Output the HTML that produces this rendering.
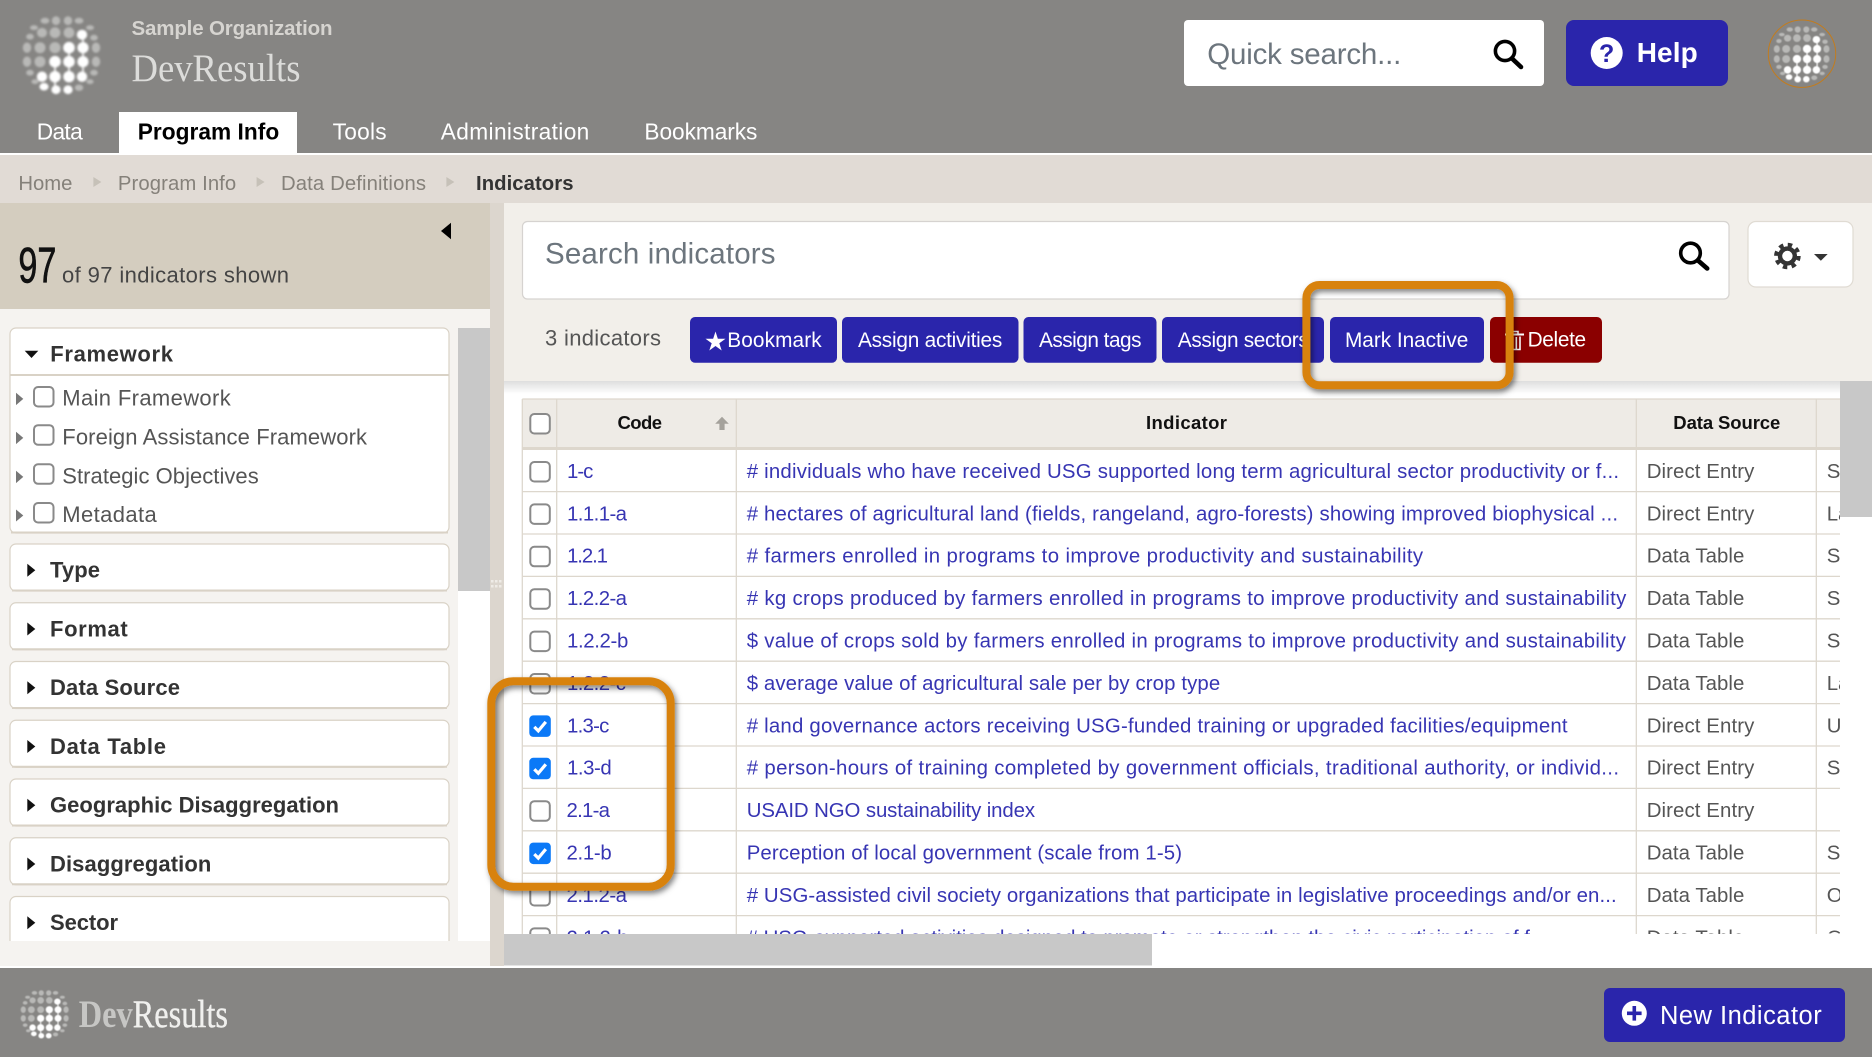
<!DOCTYPE html>
<html lang="en">
<head>
<meta charset="utf-8">
<title>Indicators - DevResults</title>
<style>
html,body{margin:0;padding:0;background:#fff;width:1872px;height:1057px;overflow:hidden}
svg{display:block}
text{font-family:"Liberation Sans",Arial,sans-serif;white-space:pre}
.serif{font-family:"Liberation Serif",serif}
.nav{font-size:22.7px;fill:#fff}
.crumb{font-size:20.3px;fill:#85817a}
.btn{font-size:20.8px;fill:#fff}
.head{font-size:22px;font-weight:700;fill:#333}
.item{font-size:22px;fill:#555}
.th{font-size:18.5px;font-weight:700;fill:#111}
.code,.link{font-size:20.4px;fill:#3735b3}
.src{font-size:20.4px;fill:#555}
.box{fill:#fff;stroke:#8a8a8a;stroke-width:2}
.grid{stroke:#ddd7cd;stroke-width:1.3}
.panel{fill:#fff;stroke:#d9d2c6;stroke-width:1.2}
.pline{stroke:#d9d2c6;stroke-width:2}
.rarrow{fill:#111}
</style>
</head>
<body>
<svg width="1872" height="1057" viewBox="0 0 1872 1057" xmlns="http://www.w3.org/2000/svg">
<defs>
  <g id="globe">
    <g fill="#b9b9b7">
      <ellipse cx="-28" cy="-27" rx="4" ry="2.4"/><ellipse cx="28" cy="-27" rx="4" ry="2.4"/>
      <ellipse cx="-17" cy="-34" rx="4.4" ry="3"/><ellipse cx="-6" cy="-34" rx="4.2" ry="4.4"/><ellipse cx="6" cy="-34" rx="4.2" ry="4.4"/><ellipse cx="17" cy="-34" rx="4.4" ry="3"/>
      <ellipse cx="-32" cy="-18" rx="3.8" ry="2.9"/><ellipse cx="-20" cy="-22" rx="5" ry="4.8"/><circle cx="-7" cy="-22" r="5.4"/><circle cx="7" cy="-22" r="5.4"/><ellipse cx="32" cy="-17" rx="3.8" ry="2.9"/>
      <ellipse cx="-35" cy="-7" rx="4.2" ry="5.2"/><circle cx="-22" cy="-7" r="5.5"/><circle cx="-7" cy="-7" r="5.6"/><ellipse cx="34" cy="-7" rx="4.2" ry="5.2"/>
      <ellipse cx="-35" cy="7" rx="4.2" ry="5.2"/><circle cx="-22" cy="7" r="5.5"/><ellipse cx="34" cy="7" rx="4.2" ry="5.2"/>
      <ellipse cx="-32" cy="18" rx="3.8" ry="2.9"/><ellipse cx="32" cy="18" rx="3.8" ry="2.9"/>
      <ellipse cx="-27" cy="27" rx="3.6" ry="2.4"/><ellipse cx="28" cy="27" rx="3.6" ry="2.4"/>
      <ellipse cx="17" cy="33" rx="4.2" ry="3.2"/>
    </g>
    <g fill="#fff">
      <ellipse cx="20" cy="-20" rx="5.2" ry="5"/>
      <circle cx="7" cy="-7" r="5.8"/><circle cx="21" cy="-7" r="5.6"/>
      <circle cx="-7" cy="7" r="5.8"/><circle cx="7" cy="7" r="5.8"/><circle cx="21" cy="7" r="5.6"/>
      <circle cx="-20" cy="22" r="5.2"/><circle cx="-7" cy="22" r="5.7"/><circle cx="7" cy="22" r="5.7"/><circle cx="20" cy="22" r="5.2"/>
      <ellipse cx="-18" cy="32" rx="4.6" ry="3.8"/><ellipse cx="-6" cy="35" rx="4.6" ry="4.4"/><ellipse cx="6" cy="35" rx="4.6" ry="4.4"/>
      <rect x="6.2" y="-8" width="1.6" height="30"/><rect x="20.2" y="-20" width="1.6" height="42"/><rect x="-7.8" y="7" width="1.6" height="28"/>
    </g>
  </g>
  <clipPath id="tclip"><rect x="504" y="381" width="1336" height="553"/></clipPath>
  <clipPath id="sclip"><rect x="0" y="309" width="490" height="632"/></clipPath>
  <clipPath id="lastcol"><rect x="1817" y="450" width="23" height="484"/></clipPath>
  <linearGradient id="shade" x1="0" y1="0" x2="0" y2="1"><stop offset="0" stop-color="#000" stop-opacity=".13"/><stop offset="1" stop-color="#000" stop-opacity="0"/></linearGradient>
  <filter id="ds" x="-20%" y="-20%" width="140%" height="140%"><feDropShadow dx="2" dy="3" stdDeviation="3" flood-color="#000" flood-opacity=".5"/></filter>
  <filter id="soft" x="-10%" y="-10%" width="120%" height="120%"><feGaussianBlur stdDeviation="1"/></filter>
  <filter id="soft2" x="-10%" y="-10%" width="120%" height="120%"><feGaussianBlur stdDeviation=".7"/></filter>
  <g id="chk"><rect x="1" y="1" width="19.5" height="19.5" rx="4" class="box"/></g>
  <g id="chked"><rect x="0" y="0" width="21.5" height="21.5" rx="4" fill="#0b79f7"/><path d="M5 11.5l4 4 7.5-9" fill="none" stroke="#fff" stroke-width="3.2"/></g>
  <path id="tri" d="M0 0l8 6.5-8 6.5z"/>
</defs>

<!-- top header -->
<rect width="1872" height="153" fill="#868583"/>
<use href="#globe" transform="translate(62 54.7)" filter="url(#soft)"/>
<text x="131.5" y="34.8" font-size="20.5" font-weight="700" fill="#d6d4d0" textLength="201">Sample Organization</text>
<text x="131.5" y="81" class="serif" font-size="39" fill="#dcdcda" textLength="169" lengthAdjust="spacingAndGlyphs">DevResults</text>

<rect x="1184" y="20" width="360" height="66" rx="4" fill="#fff"/>
<text x="1207.3" y="64" font-size="29.5" fill="#6c757d" textLength="194">Quick search...</text>
<g fill="none" stroke="#000"><circle cx="1505" cy="51" r="9.6" stroke-width="3.6"/><path d="M1512 58.5l9 8.5" stroke-width="4.6" stroke-linecap="round"/></g>

<rect x="1566" y="20" width="162" height="66" rx="8" fill="#2a25ab"/>
<circle cx="1606.7" cy="53" r="16" fill="#fff"/>
<text x="1606.7" y="62" font-size="25" font-weight="700" fill="#2a25ab" text-anchor="middle">?</text>
<text x="1636.7" y="62" font-size="28" font-weight="700" fill="#fff" textLength="61">Help</text>

<circle cx="1802" cy="53.7" r="33.7" fill="none" stroke="#c27c1e" stroke-width="1"/>
<use href="#globe" transform="translate(1802 54) scale(.72)" filter="url(#soft2)"/>

<!-- nav tabs -->
<rect x="119" y="112" width="178" height="41" fill="#fff"/>
<g transform="translate(0 -.6)">
<text x="36.7" y="140" class="nav" textLength="46">Data</text>
<text x="137.7" y="140" class="nav" style="fill:#000;font-weight:700" textLength="141.5">Program Info</text>
<text x="332.6" y="140" class="nav" textLength="54">Tools</text>
<text x="440.8" y="140" class="nav" textLength="148.5">Administration</text>
<text x="644.4" y="140" class="nav" textLength="113">Bookmarks</text>
</g>

<!-- breadcrumb -->
<rect y="155" width="1872" height="48" fill="#e1dbd5"/>
<text x="18.4" y="190" class="crumb" textLength="54">Home</text>
<path d="M93.4 177l8 5-8 5z" fill="#c6c1b8"/>
<text x="117.9" y="190" class="crumb" textLength="118.3">Program Info</text>
<path d="M256.6 177l8 5-8 5z" fill="#c6c1b8"/>
<text x="281" y="190" class="crumb" textLength="145">Data Definitions</text>
<path d="M446.4 177l8 5-8 5z" fill="#c6c1b8"/>
<text x="476" y="190" class="crumb" style="font-weight:700;fill:#333" textLength="97.5">Indicators</text>

<!-- sidebar -->
<rect y="203" width="490" height="106" fill="#d4cdbf"/>
<path d="M451 222.7v16.6l-10-8.3z" fill="#000"/>
<text x="18.4" y="282.3" font-size="50" fill="#111" stroke="#111" stroke-width=".7" textLength="38" lengthAdjust="spacingAndGlyphs">97</text>
<text x="62" y="282.5" font-size="22" fill="#444" textLength="227">of 97 indicators shown</text>

<rect y="309" width="490" height="657" fill="#f5f3f0"/>
<rect x="458" y="591" width="32" height="350" fill="#fff"/>
<rect x="458" y="328" width="32" height="263" fill="#c8c8c8"/>
<rect x="490" y="203" width="14" height="763" fill="#dcd6ce"/>
<g fill="#efece7"><rect x="491" y="580" width="2.5" height="2.5"/><rect x="495" y="580" width="2.5" height="2.5"/><rect x="499" y="580" width="2.5" height="2.5"/><rect x="491" y="585" width="2.5" height="2.5"/><rect x="495" y="585" width="2.5" height="2.5"/><rect x="499" y="585" width="2.5" height="2.5"/></g>

<g clip-path="url(#sclip)">
  <rect x="10" y="328" width="439" height="205" rx="6" class="panel"/>
  <line x1="10" y1="375" x2="449" y2="375" class="pline"/>
  <line x1="11" y1="532.5" x2="448" y2="532.5" class="pline"/>
  <path d="M24.7 350.7h13.6l-6.8 7.3z" fill="#111"/>
  <text x="50.3" y="361.7" class="head" textLength="122.7">Framework</text>
  <g fill="#777">
    <path d="M16 392.7l7.3 6.2-7.3 6.2z"/><path d="M16 431.7l7.3 6.2-7.3 6.2z"/><path d="M16 470.7l7.3 6.2-7.3 6.2z"/><path d="M16 509.5l7.3 6-7.3 6z"/>
  </g>
  <use href="#chk" x="33" y="386"/><use href="#chk" x="33" y="424.2"/><use href="#chk" x="33" y="463.3"/><use href="#chk" x="33" y="502"/>
  <g transform="translate(0 -.6)">
  <text x="62.3" y="406" class="item" textLength="168.4">Main Framework</text>
  <text x="62.3" y="445" class="item" textLength="304.7">Foreign Assistance Framework</text>
  <text x="62.3" y="484" class="item" textLength="196.4">Strategic Objectives</text>
  <text x="62.3" y="522.7" class="item" textLength="94.4">Metadata</text>
  </g>

  <g>
    <rect x="10" y="544" width="439" height="47" rx="6" class="panel"/><line x1="12" y1="590.5" x2="447" y2="590.5" class="pline"/>
    <use href="#tri" x="27.3" y="563.8" class="rarrow"/><text x="50" y="577.7" class="head" textLength="50">Type</text>
    <rect x="10" y="602.75" width="439" height="47" rx="6" class="panel"/><line x1="12" y1="649.25" x2="447" y2="649.25" class="pline"/>
    <use href="#tri" x="27.3" y="622.55" class="rarrow"/><text x="50" y="636.45" class="head" textLength="77.7">Format</text>
    <rect x="10" y="661.5" width="439" height="47" rx="6" class="panel"/><line x1="12" y1="708" x2="447" y2="708" class="pline"/>
    <use href="#tri" x="27.3" y="681.3" class="rarrow"/><text x="50" y="695.2" class="head" textLength="130">Data Source</text>
    <rect x="10" y="720.25" width="439" height="47" rx="6" class="panel"/><line x1="12" y1="766.75" x2="447" y2="766.75" class="pline"/>
    <use href="#tri" x="27.3" y="740.05" class="rarrow"/><text x="50" y="753.95" class="head" textLength="116">Data Table</text>
    <rect x="10" y="779" width="439" height="47" rx="6" class="panel"/><line x1="12" y1="825.5" x2="447" y2="825.5" class="pline"/>
    <use href="#tri" x="27.3" y="798.8" class="rarrow"/><text x="50" y="812.7" class="head" textLength="289">Geographic Disaggregation</text>
    <rect x="10" y="837.75" width="439" height="47" rx="6" class="panel"/><line x1="12" y1="884.25" x2="447" y2="884.25" class="pline"/>
    <use href="#tri" x="27.3" y="857.55" class="rarrow"/><text x="50" y="871.45" class="head" textLength="161.3">Disaggregation</text>
    <rect x="10" y="896.5" width="439" height="60" rx="6" class="panel"/>
    <use href="#tri" x="27.3" y="916.3" class="rarrow"/><text x="50" y="930.2" class="head" textLength="68">Sector</text>
  </g>
</g>

<!-- main white area -->
<rect x="504" y="381" width="1368" height="585" fill="#fff"/>

<!-- table -->
<g clip-path="url(#tclip)">
  <rect x="522.3" y="399" width="1318" height="48" fill="#eeebe6"/>
  <rect x="522.3" y="447" width="1318" height="3" fill="#ddd7cd"/>
  <g class="grid">
    <line x1="522.3" y1="399" x2="1840" y2="399"/>
    <line x1="522.3" y1="399" x2="522.3" y2="934"/>
    <line x1="556.7" y1="399" x2="556.7" y2="934"/>
    <line x1="736.3" y1="399" x2="736.3" y2="934"/>
    <line x1="1636.3" y1="399" x2="1636.3" y2="934"/>
    <line x1="1816.3" y1="399" x2="1816.3" y2="934"/>
    <line x1="522.3" y1="491.6" x2="1840" y2="491.6"/>
    <line x1="522.3" y1="534" x2="1840" y2="534"/>
    <line x1="522.3" y1="576.4" x2="1840" y2="576.4"/>
    <line x1="522.3" y1="618.8" x2="1840" y2="618.8"/>
    <line x1="522.3" y1="661.2" x2="1840" y2="661.2"/>
    <line x1="522.3" y1="703.6" x2="1840" y2="703.6"/>
    <line x1="522.3" y1="746" x2="1840" y2="746"/>
    <line x1="522.3" y1="788.4" x2="1840" y2="788.4"/>
    <line x1="522.3" y1="830.8" x2="1840" y2="830.8"/>
    <line x1="522.3" y1="873.2" x2="1840" y2="873.2"/>
    <line x1="522.3" y1="915.6" x2="1840" y2="915.6"/>
  </g>
  <use href="#chk" x="529.3" y="413"/>
  <text x="617.5" y="429" class="th" textLength="44.5">Code</text>
  <path d="M722 416.7l6.8 7h-4.2v6.3h-5.2v-6.3h-4.2z" fill="#a5a29c"/>
  <text x="1146" y="429" class="th" textLength="81">Indicator</text>
  <text x="1673.3" y="429" class="th" textLength="107">Data Source</text>

  <use href="#chk" x="529.3" y="461"/>
  <use href="#chk" x="529.3" y="503.4"/>
  <use href="#chk" x="529.3" y="545.8"/>
  <use href="#chk" x="529.3" y="588.2"/>
  <use href="#chk" x="529.3" y="630.6"/>
  <use href="#chk" x="529.3" y="673"/>
  <use href="#chked" x="529.3" y="715.4"/>
  <use href="#chked" x="529.3" y="757.8"/>
  <use href="#chk" x="529.3" y="800.2"/>
  <use href="#chked" x="529.3" y="842.6"/>
  <use href="#chk" x="529.3" y="885"/>
  <use href="#chk" x="529.3" y="927.4"/>

  <g transform="translate(0 -.6)">
  <text x="567" y="478.5" class="code" textLength="26.3">1-c</text>
  <text x="567" y="520.9" class="code" textLength="60">1.1.1-a</text>
  <text x="567" y="563.3" class="code" textLength="41">1.2.1</text>
  <text x="567" y="605.7" class="code" textLength="60">1.2.2-a</text>
  <text x="567" y="648.1" class="code" textLength="61.3">1.2.2-b</text>
  <text x="567" y="690.5" class="code" textLength="59">1.2.2-c</text>
  <text x="567" y="732.9" class="code" textLength="42.3">1.3-c</text>
  <text x="567" y="775.3" class="code" textLength="44.7">1.3-d</text>
  <text x="566.5" y="817.7" class="code" textLength="43.5">2.1-a</text>
  <text x="566.5" y="860.1" class="code" textLength="45.2">2.1-b</text>
  <text x="566.5" y="902.5" class="code" textLength="60.5">2.1.2-a</text>
  <text x="566.5" y="944.9" class="code" textLength="62">2.1.2-b</text>

  <text x="746.7" y="478.5" class="link" textLength="872.3"># individuals who have received USG supported long term agricultural sector productivity or f...</text>
  <text x="746.7" y="520.9" class="link" textLength="871.3"># hectares of agricultural land (fields, rangeland, agro-forests) showing improved biophysical ...</text>
  <text x="746.7" y="563.3" class="link" textLength="676.4"># farmers enrolled in programs to improve productivity and sustainability</text>
  <text x="746.7" y="605.7" class="link" textLength="879.6"># kg crops produced by farmers enrolled in programs to improve productivity and sustainability</text>
  <text x="746.7" y="648.1" class="link" textLength="879.3">$ value of crops sold by farmers enrolled in programs to improve productivity and sustainability</text>
  <text x="746.7" y="690.5" class="link" textLength="473.5">$ average value of agricultural sale per by crop type</text>
  <text x="746.7" y="732.9" class="link" textLength="820.9"># land governance actors receiving USG-funded training or upgraded facilities/equipment</text>
  <text x="746.7" y="775.3" class="link" textLength="872.3"># person-hours of training completed by government officials, traditional authority, or individ...</text>
  <text x="746.7" y="817.7" class="link" textLength="288.4">USAID NGO sustainability index</text>
  <text x="746.7" y="860.1" class="link" textLength="435.3">Perception of local government (scale from 1-5)</text>
  <text x="746.7" y="902.5" class="link" textLength="870"># USG-assisted civil society organizations that participate in legislative proceedings and/or en...</text>
  <text x="746.7" y="944.9" class="link" textLength="800"># USG-supported activities designed to promote or strengthen the civic participation of f...</text>

  <text x="1646.7" y="478.5" class="src" textLength="107.6">Direct Entry</text>
  <text x="1646.7" y="520.9" class="src" textLength="107.6">Direct Entry</text>
  <text x="1646.7" y="563.3" class="src" textLength="97.6">Data Table</text>
  <text x="1646.7" y="605.7" class="src" textLength="97.6">Data Table</text>
  <text x="1646.7" y="648.1" class="src" textLength="97.6">Data Table</text>
  <text x="1646.7" y="690.5" class="src" textLength="97.6">Data Table</text>
  <text x="1646.7" y="732.9" class="src" textLength="107.6">Direct Entry</text>
  <text x="1646.7" y="775.3" class="src" textLength="107.6">Direct Entry</text>
  <text x="1646.7" y="817.7" class="src" textLength="107.6">Direct Entry</text>
  <text x="1646.7" y="860.1" class="src" textLength="97.6">Data Table</text>
  <text x="1646.7" y="902.5" class="src" textLength="97.6">Data Table</text>
  <text x="1646.7" y="944.9" class="src" textLength="97.6">Data Table</text>

  <g clip-path="url(#lastcol)">
    <text x="1826.7" y="478.5" class="src">Sector</text>
    <text x="1826.7" y="520.9" class="src">Land</text>
    <text x="1826.7" y="563.3" class="src">Sector</text>
    <text x="1826.7" y="605.7" class="src">Sector</text>
    <text x="1826.7" y="648.1" class="src">Sector</text>
    <text x="1826.7" y="690.5" class="src">Land</text>
    <text x="1826.7" y="732.9" class="src">USG</text>
    <text x="1826.7" y="775.3" class="src">Sector</text>
    <text x="1826.7" y="860.1" class="src">Sector</text>
    <text x="1826.7" y="902.5" class="src">Other</text>
    <text x="1826.7" y="944.9" class="src">Other</text>
  </g>
  </g>
  <rect x="504" y="381" width="1336" height="13" fill="url(#shade)"/>
</g>

<!-- scrollbars -->
<rect x="1840" y="381" width="32" height="136" fill="#c8c8c8"/>
<rect x="504" y="934" width="648" height="31.5" fill="#c8c8c8"/>

<!-- toolbar panel -->
<rect x="504" y="203" width="1368" height="178" fill="#f2efea"/>
<rect x="522.5" y="221.5" width="1206.5" height="77.5" rx="5" fill="#fff" stroke="#d6d3d0" stroke-width="1.2"/>
<text x="545" y="263.3" font-size="29.5" fill="#6c757d" textLength="230.5">Search indicators</text>
<g fill="none" stroke="#000"><circle cx="1690.5" cy="253" r="9.8" stroke-width="3.6"/><path d="M1698 260.5l9.2 8" stroke-width="4.6" stroke-linecap="round"/></g>

<rect x="1748" y="221.5" width="105" height="65.5" rx="8" fill="#fff" stroke="#e0dbd3" stroke-width="1.2"/>
<g fill="#343434"><circle cx="1787.4" cy="256" r="9.6"/><circle cx="1787.4" cy="256" r="11.2" fill="none" stroke="#343434" stroke-width="4.2" stroke-dasharray="4.4 4.4"/></g>
<circle cx="1787.4" cy="256" r="5.2" fill="#fff"/>
<path d="M1814 254h13.7l-6.85 6.7z" fill="#343434"/>

<text x="545" y="345.7" font-size="22" fill="#555" textLength="116">3 indicators</text>

<rect x="690" y="317" width="147" height="45.7" rx="5" fill="#2a25ab"/>
<path d="M715.5 331.5l2.35 7.26 7.65-.04-6.2 4.54 2.4 7.24-6.2-4.5-6.2 4.5 2.4-7.24-6.2-4.54 7.65.04z" fill="#fff"/>
<text x="727.2" y="347" class="btn" textLength="94.5">Bookmark</text>

<rect x="842" y="317" width="176.5" height="45.7" rx="5" fill="#2a25ab"/>
<text x="858" y="347" class="btn" textLength="144.3">Assign activities</text>

<rect x="1023.5" y="317" width="133" height="45.7" rx="5" fill="#2a25ab"/>
<text x="1039" y="347" class="btn" textLength="102.5">Assign tags</text>

<rect x="1162" y="317" width="162" height="45.7" rx="5" fill="#2a25ab"/>
<text x="1177.8" y="347" class="btn" textLength="131">Assign sectors</text>

<rect x="1330" y="317" width="154" height="45.7" rx="5" fill="#2a25ab"/>
<text x="1345" y="347" class="btn" textLength="123.3">Mark Inactive</text>

<rect x="1490" y="317" width="112" height="45.7" rx="5" fill="#8b0000"/>
<g fill="none" stroke="#fff"><path d="M1505 334.5h19" stroke-width="2"/><path d="M1511 334v-2.5h7v2.5" stroke-width="1.5"/><path d="M1509 336.5v13h11v-13M1512.8 337v12M1516.3 337v12" stroke-width="1.6"/></g>
<text x="1527.6" y="346.6" class="btn" textLength="58.5">Delete</text>

<!-- footer -->
<rect y="968" width="1872" height="89" fill="#868583"/>
<use href="#globe" transform="translate(45 1014) scale(.62)" filter="url(#soft2)"/>
<text x="78.7" y="1027" class="serif" font-size="39" font-weight="700" fill="#c6c6c4" textLength="54" lengthAdjust="spacingAndGlyphs">Dev</text>
<text x="132.7" y="1027" class="serif" font-size="39" fill="#f0f0ee" stroke="#f0f0ee" stroke-width=".4" textLength="95.3" lengthAdjust="spacingAndGlyphs">Results</text>

<rect x="1604" y="988" width="241" height="54" rx="6" fill="#2a25ab"/>
<circle cx="1634.3" cy="1013.3" r="12.5" fill="#fff"/>
<path d="M1634.3 1006v14.6M1627 1013.3h14.6" stroke="#2a25ab" stroke-width="3.6"/>
<text x="1660" y="1024.2" font-size="25.5" fill="#fff" textLength="161.7">New Indicator</text>

<!-- orange callouts -->
<g fill="none" stroke="#d8820e" stroke-width="8" filter="url(#ds)">
  <rect x="1306.4" y="285" width="203.2" height="100.3" rx="13"/>
  <rect x="491.3" y="681.3" width="179.4" height="205.4" rx="22"/>
</g>
</svg>
</body>
</html>
